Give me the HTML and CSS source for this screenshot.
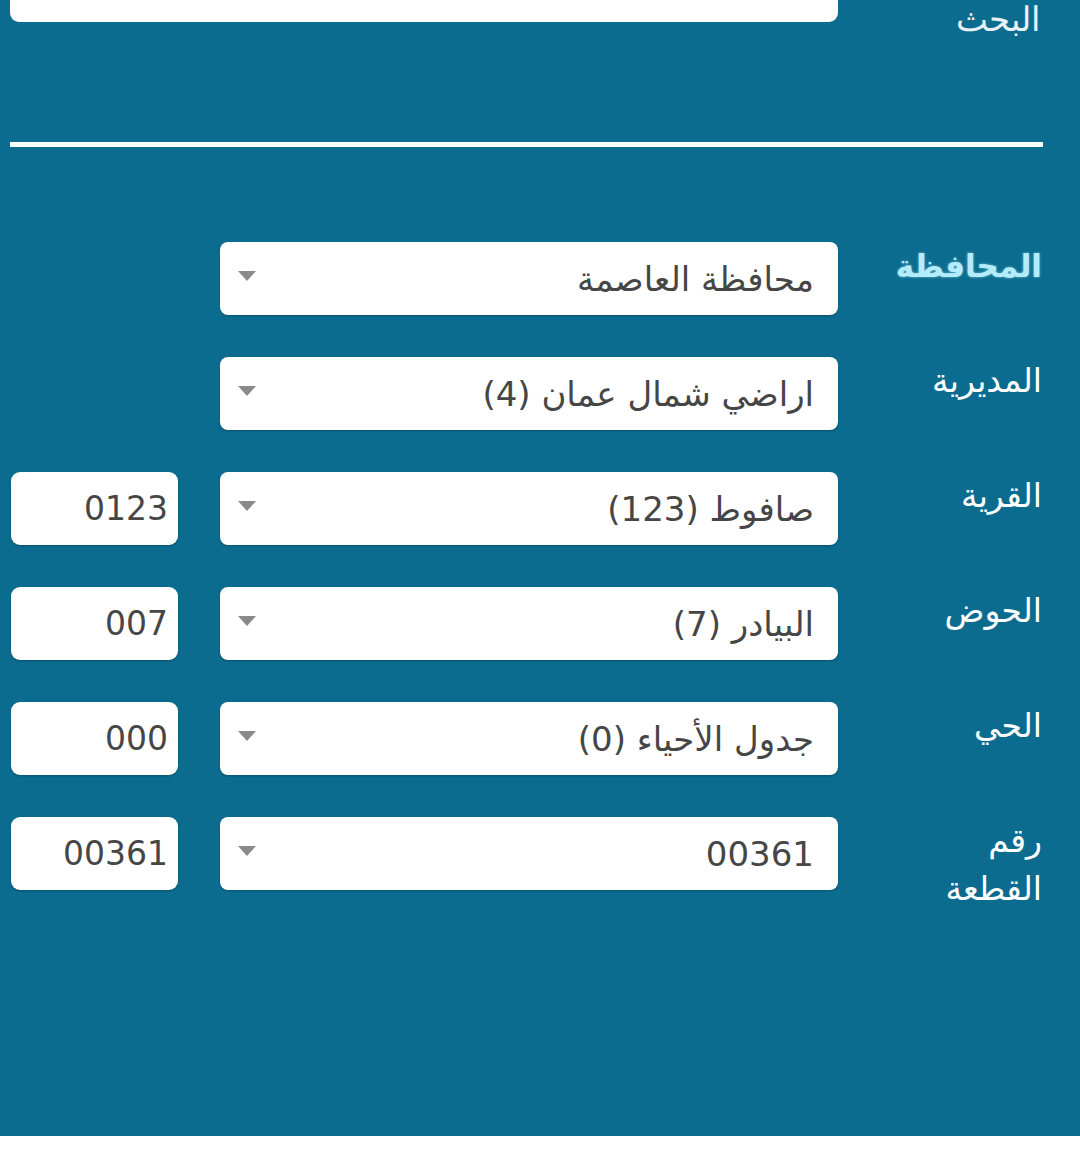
FILE: index.html
```html
<!DOCTYPE html>
<html lang="ar" dir="rtl">
<head>
<meta charset="UTF-8">
<meta name="viewport" content="width=device-width, initial-scale=1.0">
<title>البحث عن قطعة</title>
<link rel="stylesheet" href="styles.css">
</head>
<body>
<div class="panel">
  <div class="search-row">
    <span class="search-label">البحث</span>
    <div class="search-box"></div>
  </div>

  <hr class="divider">

  <div class="fields">
    <div class="field">
      <span class="field-label active">المحافظة</span>
      <div class="select"><span>محافظة العاصمة</span><i class="caret"></i></div>
    </div>
    <div class="field">
      <span class="field-label">المديرية</span>
      <div class="select"><span>اراضي شمال عمان (4)</span><i class="caret"></i></div>
    </div>
    <div class="field">
      <span class="field-label">القرية</span>
      <div class="select"><span>صافوط (123)</span><i class="caret"></i></div>
      <div class="code">0123</div>
    </div>
    <div class="field">
      <span class="field-label">الحوض</span>
      <div class="select"><span>البيادر (7)</span><i class="caret"></i></div>
      <div class="code">007</div>
    </div>
    <div class="field">
      <span class="field-label">الحي</span>
      <div class="select"><span>جدول الأحياء (0)</span><i class="caret"></i></div>
      <div class="code">000</div>
    </div>
    <div class="field">
      <span class="field-label">رقم القطعة</span>
      <div class="select"><span>00361</span><i class="caret"></i></div>
      <div class="code">00361</div>
    </div>
  </div>
</div>
</body>
</html>
```

FILE: styles.css
```css
:root {
  --panel: #0b6c8f;
  --label: #ffffff;
  --label-active: #b4ecfb;
  --text: #464646;
  --caret: #8a8a8a;
}
* { box-sizing: border-box; margin: 0; padding: 0; }
body { font-family: 'DejaVu Sans', 'Noto Sans', sans-serif; background: #ffffff; }

.panel { background: var(--panel); height: 1136px; overflow: hidden; }

/* search row sits partly above the fold */
.search-row { display: grid; grid-template-columns: 242px 828px; grid-template-rows: 22px; align-items: end; }
.search-label { color: var(--label); font-size: 34px; font-weight: 300; line-height: 34px; padding-right: 40px; transform: translateY(14px); opacity: 0.9; }
.search-box { background: #fff; height: 22px; border-radius: 0 0 9px 9px; }

.divider { border: none; height: 5px; background: #fff; margin: 120px 37px 0 10px; }

.fields { display: flex; flex-direction: column; gap: 42px; padding-top: 95px; }
.field { display: grid; grid-template-columns: 242px 618px 209px; align-items: start; height: 73px; }
.field .code { margin-right: 42px; }

.field-label { color: var(--label); font-size: 33px; line-height: 48px; padding: 0 38px 0 52px; text-align: right; }
.field-label.active { color: var(--label-active); font-weight: bold; font-size: 31px; text-shadow: 0 0 3px rgba(180,236,251,0.6); }

.select { background: #fff; border-radius: 8px; height: 73px; display: flex; align-items: center; justify-content: space-between; padding: 0 24px 0 18px; box-shadow: 0 1px 2px rgba(0,0,0,0.25); }
.select span { color: var(--text); font-size: 34px; }
.caret { width: 0; height: 0; border-left: 9px solid transparent; border-right: 9px solid transparent; border-top: 10px solid var(--caret); margin-top: -6px; }

.code { background: #fff; border-radius: 9px; height: 73px; display: flex; align-items: center; padding-right: 10px; color: var(--text); font-size: 33px; box-shadow: 0 1px 2px rgba(0,0,0,0.25); }
```
